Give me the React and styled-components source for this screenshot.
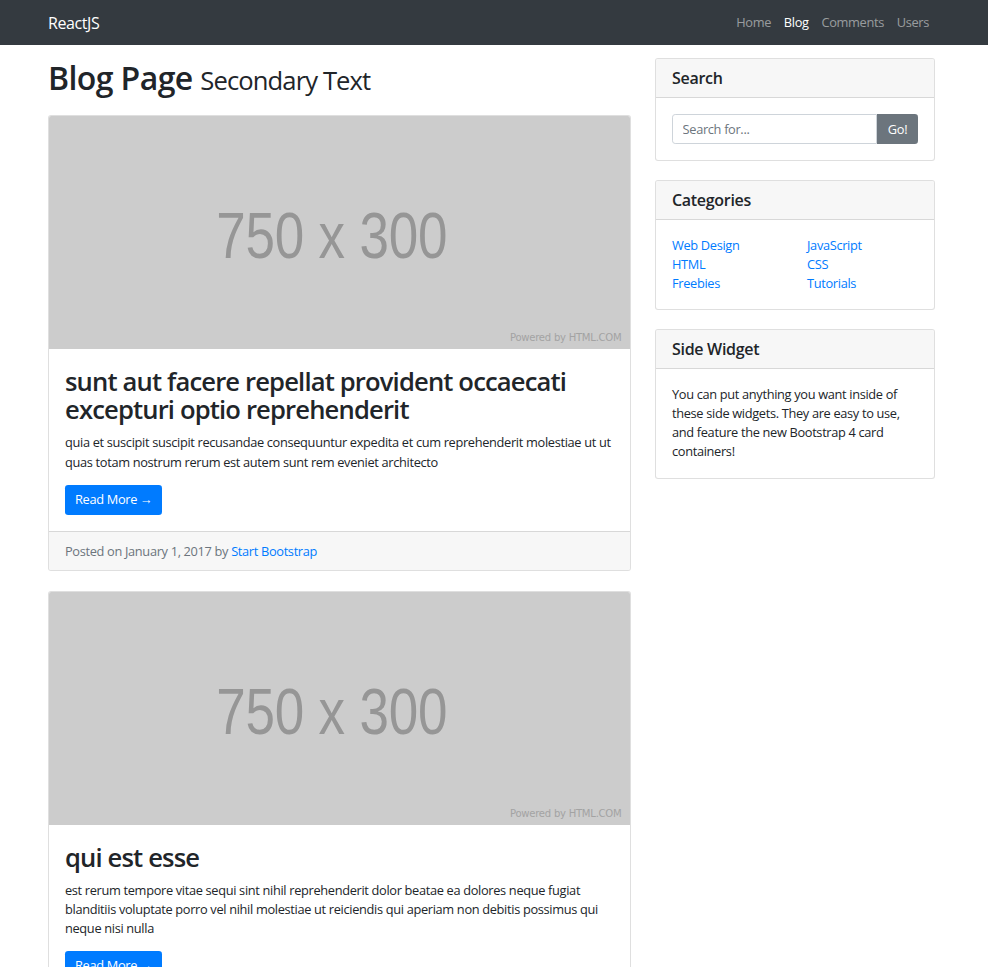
import React from "react";
import styled, { createGlobalStyle } from "styled-components";

const Global = createGlobalStyle`
  html, body { margin: 0; padding: 0; background: #fff; }
  body {
    font-family: "Open Sans", "Noto Sans", sans-serif;
    font-size: 12.8px;
    line-height: 1.5;
    letter-spacing: -0.33px;
    color: #212529;
  }
  * { box-sizing: border-box; }
`;

const Navbar = styled.nav`
  height: 45px;
  background: #343a40;
  display: flex;
  align-items: center;
  justify-content: space-between;
  padding: 0 53px 0 48px;
`;

const Brand = styled.a`
  color: #fff;
  font-size: 16px;
  line-height: 1;
  letter-spacing: -0.4px;
  text-decoration: none;
`;

const NavList = styled.div`
  display: flex;
`;

const NavLink = styled.a`
  color: ${(p) => (p.$active ? "#fff" : "rgba(255,255,255,0.5)")};
  font-size: 12.8px;
  padding: 0 6.4px;
  text-decoration: none;
  &:last-child { padding-right: 6px; }
`;

const Container = styled.div`
  width: 887px;
  margin-left: 48px;
  display: grid;
  grid-template-columns: 583px 280px;
  column-gap: 24px;
  align-items: start;
`;

const Main = styled.main`
  display: flex;
  flex-direction: column;
`;

const Title = styled.h1`
  margin: 14px 0 18px;
  font-size: 32px;
  font-weight: 600;
  line-height: 1.2;
  letter-spacing: -0.6px;
  small {
    font-size: 25.6px;
    font-weight: 400;
    letter-spacing: -0.9px;
  }
`;

const Card = styled.div`
  border: 1px solid rgba(0, 0, 0, 0.125);
  border-radius: 3.2px;
  background: #fff;
  margin-bottom: 19.2px;
  overflow: hidden;
  display: flex;
  flex-direction: column;
`;

const Placeholder = styled.svg`
  display: block;
  width: 100%;
  height: 233px;
`;

const CardBody = styled.div`
  padding: ${(p) => (p.$post ? "19px 16px 16px" : "16px")};
`;

const PostTitle = styled.h2`
  margin: 0 0 9px;
  font-size: 25.6px;
  font-weight: 600;
  line-height: 28px;
  letter-spacing: -0.85px;
`;

const Text = styled.p`
  margin: 0 0 ${(p) => p.$mb || "12.8px"};
`;

const Button = styled.a`
  display: inline-block;
  background: #007bff;
  color: #fff;
  border-radius: 3.2px;
  padding: 5.6px 10px;
  font-size: 12.8px;
  line-height: 19.2px;
  text-decoration: none;
`;

const CardFooter = styled.div`
  background: #f7f7f7;
  border-top: 1px solid rgba(0, 0, 0, 0.125);
  padding: 9.6px 16px;
  color: #6c757d;
  a { color: #007bff; text-decoration: none; }
`;

const Side = styled.aside`
  margin-top: 13px;
  display: flex;
  flex-direction: column;
`;

const CardHeader = styled.h5`
  margin: 0;
  background: #f7f7f7;
  border-bottom: 1px solid rgba(0, 0, 0, 0.125);
  padding: 9.5px 16px;
  font-size: 16px;
  font-weight: 600;
  line-height: 18.5px;
  letter-spacing: -0.3px;
`;

const InputGroup = styled.div`
  display: flex;
  height: 30.4px;
`;

const Input = styled.input`
  flex: 1;
  min-width: 0;
  border: 1px solid #ced4da;
  border-radius: 3.2px 0 0 3.2px;
  padding: 4.8px 9.6px;
  font-family: inherit;
  font-size: 12.8px;
  letter-spacing: -0.33px;
  color: #495057;
  &::placeholder { color: #6c757d; }
`;

const GoButton = styled.button`
  background: #6c757d;
  color: #fff;
  border: none;
  border-radius: 0 3.2px 3.2px 0;
  padding: 0;
  font-family: inherit;
  font-size: 12.8px;
  letter-spacing: -0.33px;
  width: 41px;
`;

const CatGrid = styled.div`
  display: grid;
  grid-template-columns: 135px 1fr;
`;

const CatList = styled.ul`
  list-style: none;
  margin: 0;
  padding: 0;
  a { color: #007bff; text-decoration: none; }
`;

function PlaceholderImage() {
  return (
    <Placeholder viewBox="0 0 750 300" preserveAspectRatio="none">
      <rect width="750" height="300" fill="#cccccc" />
      <text
        x="216"
        y="183"
        fontFamily="Liberation Sans, Arial, sans-serif"
        fontSize="84"
        fill="#969696"
        textLength="298"
        lengthAdjust="spacingAndGlyphs"
      >
        750 x 300
      </text>
      <text
        x="739"
        y="290"
        textAnchor="end"
        fontFamily="DejaVu Sans, sans-serif"
        fontSize="13"
        fill="#a3a3a3"
      >
        Powered by HTML.COM
      </text>
    </Placeholder>
  );
}

const posts = [
  {
    title: "sunt aut facere repellat provident occaecati excepturi optio reprehenderit",
    body: "quia et suscipit suscipit recusandae consequuntur expedita et cum reprehenderit molestiae ut ut quas totam nostrum rerum est autem sunt rem eveniet architecto",
  },
  {
    title: "qui est esse",
    body: "est rerum tempore vitae sequi sint nihil reprehenderit dolor beatae ea dolores neque fugiat blanditiis voluptate porro vel nihil molestiae ut reiciendis qui aperiam non debitis possimus qui neque nisi nulla",
  },
];

export default function App() {
  return (
    <>
      <Global />
      <Navbar>
        <Brand href="#">ReactJS</Brand>
        <NavList>
          <NavLink href="#">Home</NavLink>
          <NavLink href="#" $active>Blog</NavLink>
          <NavLink href="#">Comments</NavLink>
          <NavLink href="#">Users</NavLink>
        </NavList>
      </Navbar>
      <Container>
        <Main>
          <Title>
            Blog Page <small>Secondary Text</small>
          </Title>
          {posts.map((p, i) => (
            <Card key={i}>
              <PlaceholderImage />
              <CardBody $post>
                <PostTitle>{p.title}</PostTitle>
                <Text>{p.body}</Text>
                <Button href="#">Read More &rarr;</Button>
              </CardBody>
              <CardFooter>
                Posted on January 1, 2017 by <a href="#">Start Bootstrap</a>
              </CardFooter>
            </Card>
          ))}
        </Main>
        <Side>
          <Card>
            <CardHeader>Search</CardHeader>
            <CardBody>
              <InputGroup>
                <Input placeholder="Search for..." />
                <GoButton>Go!</GoButton>
              </InputGroup>
            </CardBody>
          </Card>
          <Card>
            <CardHeader>Categories</CardHeader>
            <CardBody>
              <CatGrid>
                <CatList>
                  <li><a href="#">Web Design</a></li>
                  <li><a href="#">HTML</a></li>
                  <li><a href="#">Freebies</a></li>
                </CatList>
                <CatList>
                  <li><a href="#">JavaScript</a></li>
                  <li><a href="#">CSS</a></li>
                  <li><a href="#">Tutorials</a></li>
                </CatList>
              </CatGrid>
            </CardBody>
          </Card>
          <Card>
            <CardHeader>Side Widget</CardHeader>
            <CardBody>
              <Text $mb="0">
                You can put anything you want inside of these side widgets. They are easy to use, and feature the new Bootstrap 4 card containers!
              </Text>
            </CardBody>
          </Card>
        </Side>
      </Container>
    </>
  );
}
